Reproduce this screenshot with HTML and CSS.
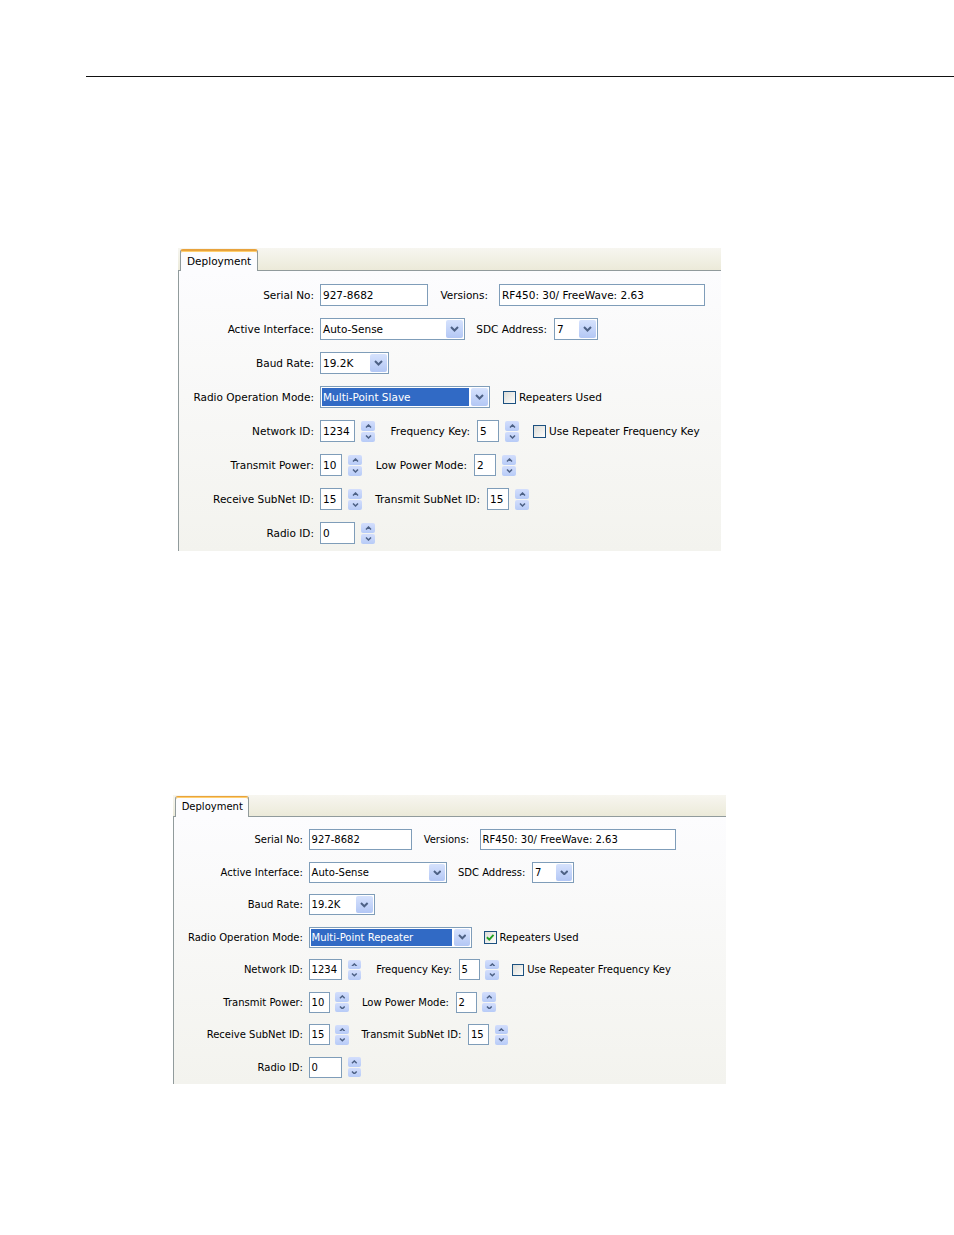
FILE: index.html
```html
<!DOCTYPE html>
<html lang="en">

<head>
    <meta charset="UTF-8">
    <title>Deployment settings</title>
    <link rel="stylesheet" href="styles.css">
</head>

<body>

    <div class="rule"></div>

    <!-- Multi-Point Slave -->
    <div class="shot shot-1">
        <div class="panel">
            <div class="tabs"><div class="tab">Deployment</div></div>
            <div class="sheet">
                <div class="row">
                    <span class="lbl">Serial No:</span>
                    <span class="field f-serial">927-8682</span>
                    <span class="lbl2 l-versions">Versions:</span>
                    <span class="field f-versions">RF450: 30/ FreeWave: 2.63</span>
                </div>
                <div class="row">
                    <span class="lbl">Active Interface:</span>
                    <span class="combo c-iface"><span class="combo-text">Auto-Sense</span><span class="combo-btn"><svg width="9" height="6" viewBox="0 0 9 6"><polyline points="1,1 4.5,4.5 8,1" /></svg></span></span>
                    <span class="lbl2 l-sdc">SDC Address:</span>
                    <span class="combo c-sdc"><span class="combo-text">7</span><span class="combo-btn"><svg width="9" height="6" viewBox="0 0 9 6"><polyline points="1,1 4.5,4.5 8,1" /></svg></span></span>
                </div>
                <div class="row">
                    <span class="lbl">Baud Rate:</span>
                    <span class="combo c-baud"><span class="combo-text">19.2K</span><span class="combo-btn"><svg width="9" height="6" viewBox="0 0 9 6"><polyline points="1,1 4.5,4.5 8,1" /></svg></span></span>
                </div>
                <div class="row">
                    <span class="lbl">Radio Operation Mode:</span>
                    <span class="combo c-mode"><span class="combo-text sel">Multi-Point Slave</span><span class="combo-btn"><svg width="9" height="6" viewBox="0 0 9 6"><polyline points="1,1 4.5,4.5 8,1" /></svg></span></span>
                    <span class="check"><span class="box"></span>Repeaters Used</span>
                </div>
                <div class="row">
                    <span class="lbl">Network ID:</span>
                    <span class="field f-num">1234</span>
                    <span class="spin"><span><svg width="7" height="4" viewBox="0 0 7 4"><polyline points="1,3.5 3.5,1 6,3.5" /></svg></span><span><svg width="7" height="4" viewBox="0 0 7 4"><polyline points="1,0.5 3.5,3 6,0.5" /></svg></span></span>
                    <span class="lbl2 l-freq">Frequency Key:</span>
                    <span class="field f-small">5</span>
                    <span class="spin"><span><svg width="7" height="4" viewBox="0 0 7 4"><polyline points="1,3.5 3.5,1 6,3.5" /></svg></span><span><svg width="7" height="4" viewBox="0 0 7 4"><polyline points="1,0.5 3.5,3 6,0.5" /></svg></span></span>
                    <span class="check check-far"><span class="box"></span>Use Repeater Frequency Key</span>
                </div>
                <div class="row">
                    <span class="lbl">Transmit Power:</span>
                    <span class="field f-small">10</span>
                    <span class="spin"><span><svg width="7" height="4" viewBox="0 0 7 4"><polyline points="1,3.5 3.5,1 6,3.5" /></svg></span><span><svg width="7" height="4" viewBox="0 0 7 4"><polyline points="1,0.5 3.5,3 6,0.5" /></svg></span></span>
                    <span class="lbl2 l-lowpower">Low Power Mode:</span>
                    <span class="field f-small">2</span>
                    <span class="spin"><span><svg width="7" height="4" viewBox="0 0 7 4"><polyline points="1,3.5 3.5,1 6,3.5" /></svg></span><span><svg width="7" height="4" viewBox="0 0 7 4"><polyline points="1,0.5 3.5,3 6,0.5" /></svg></span></span>
                </div>
                <div class="row">
                    <span class="lbl">Receive SubNet ID:</span>
                    <span class="field f-small">15</span>
                    <span class="spin"><span><svg width="7" height="4" viewBox="0 0 7 4"><polyline points="1,3.5 3.5,1 6,3.5" /></svg></span><span><svg width="7" height="4" viewBox="0 0 7 4"><polyline points="1,0.5 3.5,3 6,0.5" /></svg></span></span>
                    <span class="lbl2 l-txsub">Transmit SubNet ID:</span>
                    <span class="field f-small">15</span>
                    <span class="spin"><span><svg width="7" height="4" viewBox="0 0 7 4"><polyline points="1,3.5 3.5,1 6,3.5" /></svg></span><span><svg width="7" height="4" viewBox="0 0 7 4"><polyline points="1,0.5 3.5,3 6,0.5" /></svg></span></span>
                </div>
                <div class="row">
                    <span class="lbl">Radio ID:</span>
                    <span class="field f-num">0</span>
                    <span class="spin"><span><svg width="7" height="4" viewBox="0 0 7 4"><polyline points="1,3.5 3.5,1 6,3.5" /></svg></span><span><svg width="7" height="4" viewBox="0 0 7 4"><polyline points="1,0.5 3.5,3 6,0.5" /></svg></span></span>
                </div>
            </div>
        </div>
    </div>

    <!-- Multi-Point Repeater -->
    <div class="shot shot-2">
        <div class="panel">
            <div class="tabs"><div class="tab">Deployment</div></div>
            <div class="sheet">
                <div class="row">
                    <span class="lbl">Serial No:</span>
                    <span class="field f-serial">927-8682</span>
                    <span class="lbl2 l-versions">Versions:</span>
                    <span class="field f-versions">RF450: 30/ FreeWave: 2.63</span>
                </div>
                <div class="row">
                    <span class="lbl">Active Interface:</span>
                    <span class="combo c-iface"><span class="combo-text">Auto-Sense</span><span class="combo-btn"><svg width="9" height="6" viewBox="0 0 9 6"><polyline points="1,1 4.5,4.5 8,1" /></svg></span></span>
                    <span class="lbl2 l-sdc">SDC Address:</span>
                    <span class="combo c-sdc"><span class="combo-text">7</span><span class="combo-btn"><svg width="9" height="6" viewBox="0 0 9 6"><polyline points="1,1 4.5,4.5 8,1" /></svg></span></span>
                </div>
                <div class="row">
                    <span class="lbl">Baud Rate:</span>
                    <span class="combo c-baud"><span class="combo-text">19.2K</span><span class="combo-btn"><svg width="9" height="6" viewBox="0 0 9 6"><polyline points="1,1 4.5,4.5 8,1" /></svg></span></span>
                </div>
                <div class="row">
                    <span class="lbl">Radio Operation Mode:</span>
                    <span class="combo c-mode2"><span class="combo-text sel">Multi-Point Repeater</span><span class="combo-btn"><svg width="9" height="6" viewBox="0 0 9 6"><polyline points="1,1 4.5,4.5 8,1" /></svg></span></span>
                    <span class="check"><span class="box"><svg width="11" height="11" viewBox="0 0 11 11"><polyline class="tick" points="2,5.5 4.5,8 9,3" /></svg></span>Repeaters Used</span>
                </div>
                <div class="row">
                    <span class="lbl">Network ID:</span>
                    <span class="field f-num">1234</span>
                    <span class="spin"><span><svg width="7" height="4" viewBox="0 0 7 4"><polyline points="1,3.5 3.5,1 6,3.5" /></svg></span><span><svg width="7" height="4" viewBox="0 0 7 4"><polyline points="1,0.5 3.5,3 6,0.5" /></svg></span></span>
                    <span class="lbl2 l-freq">Frequency Key:</span>
                    <span class="field f-small">5</span>
                    <span class="spin"><span><svg width="7" height="4" viewBox="0 0 7 4"><polyline points="1,3.5 3.5,1 6,3.5" /></svg></span><span><svg width="7" height="4" viewBox="0 0 7 4"><polyline points="1,0.5 3.5,3 6,0.5" /></svg></span></span>
                    <span class="check check-far"><span class="box"></span>Use Repeater Frequency Key</span>
                </div>
                <div class="row">
                    <span class="lbl">Transmit Power:</span>
                    <span class="field f-small">10</span>
                    <span class="spin"><span><svg width="7" height="4" viewBox="0 0 7 4"><polyline points="1,3.5 3.5,1 6,3.5" /></svg></span><span><svg width="7" height="4" viewBox="0 0 7 4"><polyline points="1,0.5 3.5,3 6,0.5" /></svg></span></span>
                    <span class="lbl2 l-lowpower">Low Power Mode:</span>
                    <span class="field f-small">2</span>
                    <span class="spin"><span><svg width="7" height="4" viewBox="0 0 7 4"><polyline points="1,3.5 3.5,1 6,3.5" /></svg></span><span><svg width="7" height="4" viewBox="0 0 7 4"><polyline points="1,0.5 3.5,3 6,0.5" /></svg></span></span>
                </div>
                <div class="row">
                    <span class="lbl">Receive SubNet ID:</span>
                    <span class="field f-small">15</span>
                    <span class="spin"><span><svg width="7" height="4" viewBox="0 0 7 4"><polyline points="1,3.5 3.5,1 6,3.5" /></svg></span><span><svg width="7" height="4" viewBox="0 0 7 4"><polyline points="1,0.5 3.5,3 6,0.5" /></svg></span></span>
                    <span class="lbl2 l-txsub">Transmit SubNet ID:</span>
                    <span class="field f-small">15</span>
                    <span class="spin"><span><svg width="7" height="4" viewBox="0 0 7 4"><polyline points="1,3.5 3.5,1 6,3.5" /></svg></span><span><svg width="7" height="4" viewBox="0 0 7 4"><polyline points="1,0.5 3.5,3 6,0.5" /></svg></span></span>
                </div>
                <div class="row">
                    <span class="lbl">Radio ID:</span>
                    <span class="field f-num">0</span>
                    <span class="spin"><span><svg width="7" height="4" viewBox="0 0 7 4"><polyline points="1,3.5 3.5,1 6,3.5" /></svg></span><span><svg width="7" height="4" viewBox="0 0 7 4"><polyline points="1,0.5 3.5,3 6,0.5" /></svg></span></span>
                </div>
            </div>
        </div>
    </div>

</body>

</html>
```

FILE: styles.css
```css
body {
    margin: 0;
    background-color: #fff;
    color: #000;
    font-family: "DejaVu Sans", Verdana, sans-serif;
}

.rule {
    margin: 76px 0 0 86px;
    border-top: 1px solid #111;
}

.shot-1 {
    margin: 171px 0 0 178px;
}

.shot-2 {
    margin: 244px 0 0 173px;
}

.panel {
    width: 543px;
    height: 303px;
    display: flex;
    flex-direction: column;
    font-size: 10.5px;
}

.shot-2 .panel {
    zoom: 0.955;
    width: 579px;
}

/* tab strip */
.tabs {
    height: 22px;
    flex: none;
    display: flex;
    align-items: flex-end;
    padding-left: 2px;
    border-bottom: 1px solid #919b9c;
    background: linear-gradient(#f7f6f0, #ecead9);
}

.tab {
    position: relative;
    box-sizing: border-box;
    width: 78px;
    height: 22px;
    margin-bottom: -1px;
    padding-left: 6px;
    display: flex;
    align-items: center;
    border: 1px solid #919b9c;
    border-top: 2px solid #e8a33d;
    border-bottom: none;
    border-radius: 3px 3px 0 0;
    box-shadow: inset 0 1px 0 #ffcf6e;
    background-color: #fcfcfe;
}

.sheet {
    flex: 1;
    padding-top: 7px;
    border-left: 1px solid #919b9c;
    background: linear-gradient(#fcfcfe, #f3f3ee);
}

.row {
    height: 34px;
    display: flex;
    align-items: center;
    white-space: nowrap;
}

.lbl {
    width: 135px;
    margin-right: 6px;
    text-align: right;
    flex: none;
}

.lbl2 {
    margin-right: 7px;
    text-align: right;
    flex: none;
}

.l-versions { width: 60px; margin-right: 11px; }
.l-sdc { width: 82px; }
.l-freq { width: 95px; }
.l-lowpower { width: 105px; }
.l-txsub { width: 118px; }

/* text boxes */
.field {
    height: 22px;
    box-sizing: border-box;
    flex: none;
    display: flex;
    align-items: center;
    padding-left: 2px;
    border: 1px solid #7f9db9;
    background-color: #fff;
}

.f-serial { width: 108px; }
.f-versions { width: 206px; }
.f-num { width: 35px; }
.f-small { width: 22px; }

/* drop-down boxes */
.combo {
    height: 22px;
    box-sizing: border-box;
    flex: none;
    display: flex;
    border: 1px solid #7f9db9;
    background-color: #fff;
}

.c-iface { width: 145px; }
.c-sdc { width: 44px; }
.c-baud { width: 69px; }
.c-mode { width: 170px; }
.c-mode2 { width: 171px; }

.combo-text {
    flex: 1;
    display: flex;
    align-items: center;
    padding-left: 2px;
}

.combo-text.sel {
    margin: 1px;
    padding-left: 1px;
    background-color: #316ac5;
    color: #fff;
}

.combo-btn {
    width: 17px;
    margin: 1px;
    border-radius: 2px;
    display: flex;
    align-items: center;
    justify-content: center;
    background: linear-gradient(#d6e2fd, #b3c7f5);
}

.combo-btn polyline {
    fill: none;
    stroke: #4d6185;
    stroke-width: 2;
}

/* up/down buttons */
.spin {
    width: 14px;
    height: 21px;
    margin-left: 6px;
    flex: none;
    display: flex;
    flex-direction: column;
    gap: 1px;
}

.spin span {
    flex: 1;
    border-radius: 2px;
    display: flex;
    align-items: center;
    justify-content: center;
    background: linear-gradient(#d3defc, #b7cbf7);
}

.spin polyline {
    fill: none;
    stroke: #4d6185;
    stroke-width: 1.5;
}

/* check boxes */
.check {
    margin-left: 13px;
    display: flex;
    align-items: center;
}

.check-far {
    margin-left: 14px;
}

.box {
    width: 13px;
    height: 13px;
    box-sizing: border-box;
    margin-right: 3px;
    display: flex;
    align-items: center;
    justify-content: center;
    border: 1px solid #1c5180;
    background: linear-gradient(135deg, #dcdcd7, #fdfdfb);
}

.tick {
    fill: none;
    stroke: #21a121;
    stroke-width: 2;
}
```
